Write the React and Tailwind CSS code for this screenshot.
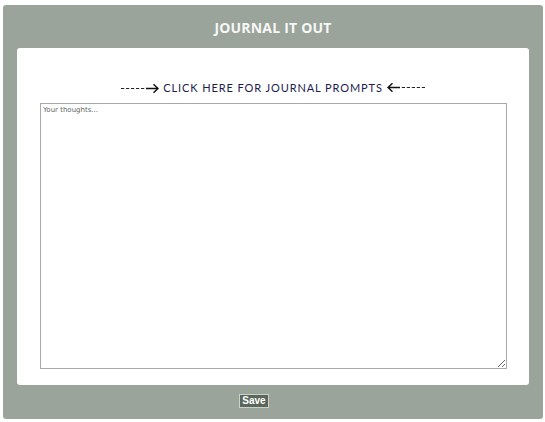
function Arrow({ left = false }) {
	return (
		<svg width="38" height="10" viewBox="0 0 38 10" className={left ? 'rotate-180' : ''}>
			<path d="M0 5.5H25" fill="none" stroke="#222" strokeWidth="1" strokeDasharray="3.2 1.8" />
			<path d="M25 5.5H37M32.5 1.2L37 5.5L32.5 9.8" fill="none" stroke="#111" strokeWidth="1.4" />
		</svg>
	);
}

export default function App() {
	return (
		<div className="pt-[5px] pl-[3px]">
			<div className="flex h-[414px] w-[540px] flex-col rounded-[3px] bg-[#9aa49a]">
				<div className="flex h-[43px] items-center justify-center pt-[1px]">
					<h1 className="font-['Open_Sans',sans-serif] text-[14px] font-bold tracking-[0.2px] text-[#f7f7f7]">JOURNAL IT OUT</h1>
				</div>
				<div className="mx-[14px] flex h-[337px] flex-col rounded-[3px] bg-white">
					<div className="flex h-[55px] items-end justify-center pb-[7px]">
						<a className="flex items-center font-['Lato',sans-serif] text-[11px] tracking-[0.9px] text-[#1c1c4c]">
							<Arrow />
							<span className="mx-[4px]">CLICK HERE FOR JOURNAL PROMPTS</span>
							<Arrow left />
						</a>
					</div>
					<textarea
						className="ml-[23px] h-[266px] w-[467px] resize border border-[#a9a9a9] px-[2px] py-[1px] font-['DejaVu_Sans',sans-serif] text-[7px] text-[#555] outline-none placeholder:text-[#666]"
						placeholder="Your thoughts..."
					/>
				</div>
				<div className="flex flex-1 items-center pl-[236px] pb-[2px]">
					<button className="h-[14px] w-[30px] border border-[#c9d1c9] bg-[#5b675b] font-['Liberation_Sans',sans-serif] text-[10px] leading-[12px] font-bold text-white">Save</button>
				</div>
			</div>
		</div>
	);
}
